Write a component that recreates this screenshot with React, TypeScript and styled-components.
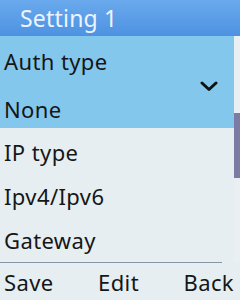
import * as React from 'react';
import styled, {createGlobalStyle} from 'styled-components';

const Global = createGlobalStyle`
  html, body {
    margin: 0;
    padding: 0;
    background: #e6eef1;
  }
  body {
    font-family: "Noto Sans", "Open Sans", sans-serif;
  }
`;

const Screen = styled.div`
   width: 240px;
   height: 300px;
   display: flex;
   flex-direction: column;
   background: #e6eef1;
   overflow: hidden;
`;

const TitleBar = styled.div`
   height: 36px;
   display: flex;
   align-items: center;
   padding-left: 20px;
   background: linear-gradient(#6aa9ec, #4d92e2);
   color: #eef4ff;
   font-size: 23px;
   letter-spacing: 0.2px;
`;

const Body = styled.div`
   height: 226px;
   display: flex;
`;

const List = styled.div`
   flex: 1;
   display: flex;
   flex-direction: column;
`;

const Selected = styled.div`
   position: relative;
   height: 92px;
   padding-top: 3px;
   box-sizing: border-box;
   display: flex;
   flex-direction: column;
   gap: 7px;
   background: #84c7ec;
`;

const Line = styled.div<{h: number}>`
   height: ${p => p.h}px;
   line-height: ${p => p.h}px;
   padding-left: 4px;
   font-size: 22px;
   letter-spacing: 0.4px;
   color: #161616;
   white-space: nowrap;
`;

const Items = styled.div`
   display: flex;
   flex-direction: column;
   margin-top: 2px;
`;

const Chevron = styled.svg`
   position: absolute;
   left: 200px;
   top: 45px;
`;

const Track = styled.div`
   width: 6px;
   display: flex;
   flex-direction: column;
   background: #e9eff2;
`;

const Thumb = styled.div`
   margin-top: 77px;
   height: 65px;
   background: #7b7ba3;
`;

const Divider = styled.div`
   width: 222px;
   height: 1px;
   background: #8795a6;
`;

const Footer = styled.div`
   flex: 1;
   display: flex;
   justify-content: space-between;
   align-items: center;
   padding: 0 6px 0 4px;
   font-size: 22px;
   letter-spacing: 0.4px;
   color: #161616;
`;

export default function App() {
    return (
        <Screen>
            <Global/>
            <TitleBar>Setting 1</TitleBar>
            <Body>
                <List>
                    <Selected>
                        <Line h={44}>Auth type</Line>
                        <Line h={38}>None</Line>
                        <Chevron width="18" height="11" viewBox="0 0 18 11">
                            <path d="M2 2 L9 8.5 L16 2" fill="none" stroke="#111" strokeWidth="3"
                                  strokeLinecap="round" strokeLinejoin="round"/>
                        </Chevron>
                    </Selected>
                    <Items>
                        <Line h={44}>IP type</Line>
                        <Line h={44}>Ipv4/Ipv6</Line>
                        <Line h={44}>Gateway</Line>
                    </Items>
                </List>
                <Track>
                    <Thumb/>
                </Track>
            </Body>
            <Divider/>
            <Footer>
                <span>Save</span>
                <span>Edit</span>
                <span>Back</span>
            </Footer>
        </Screen>
    );
}
